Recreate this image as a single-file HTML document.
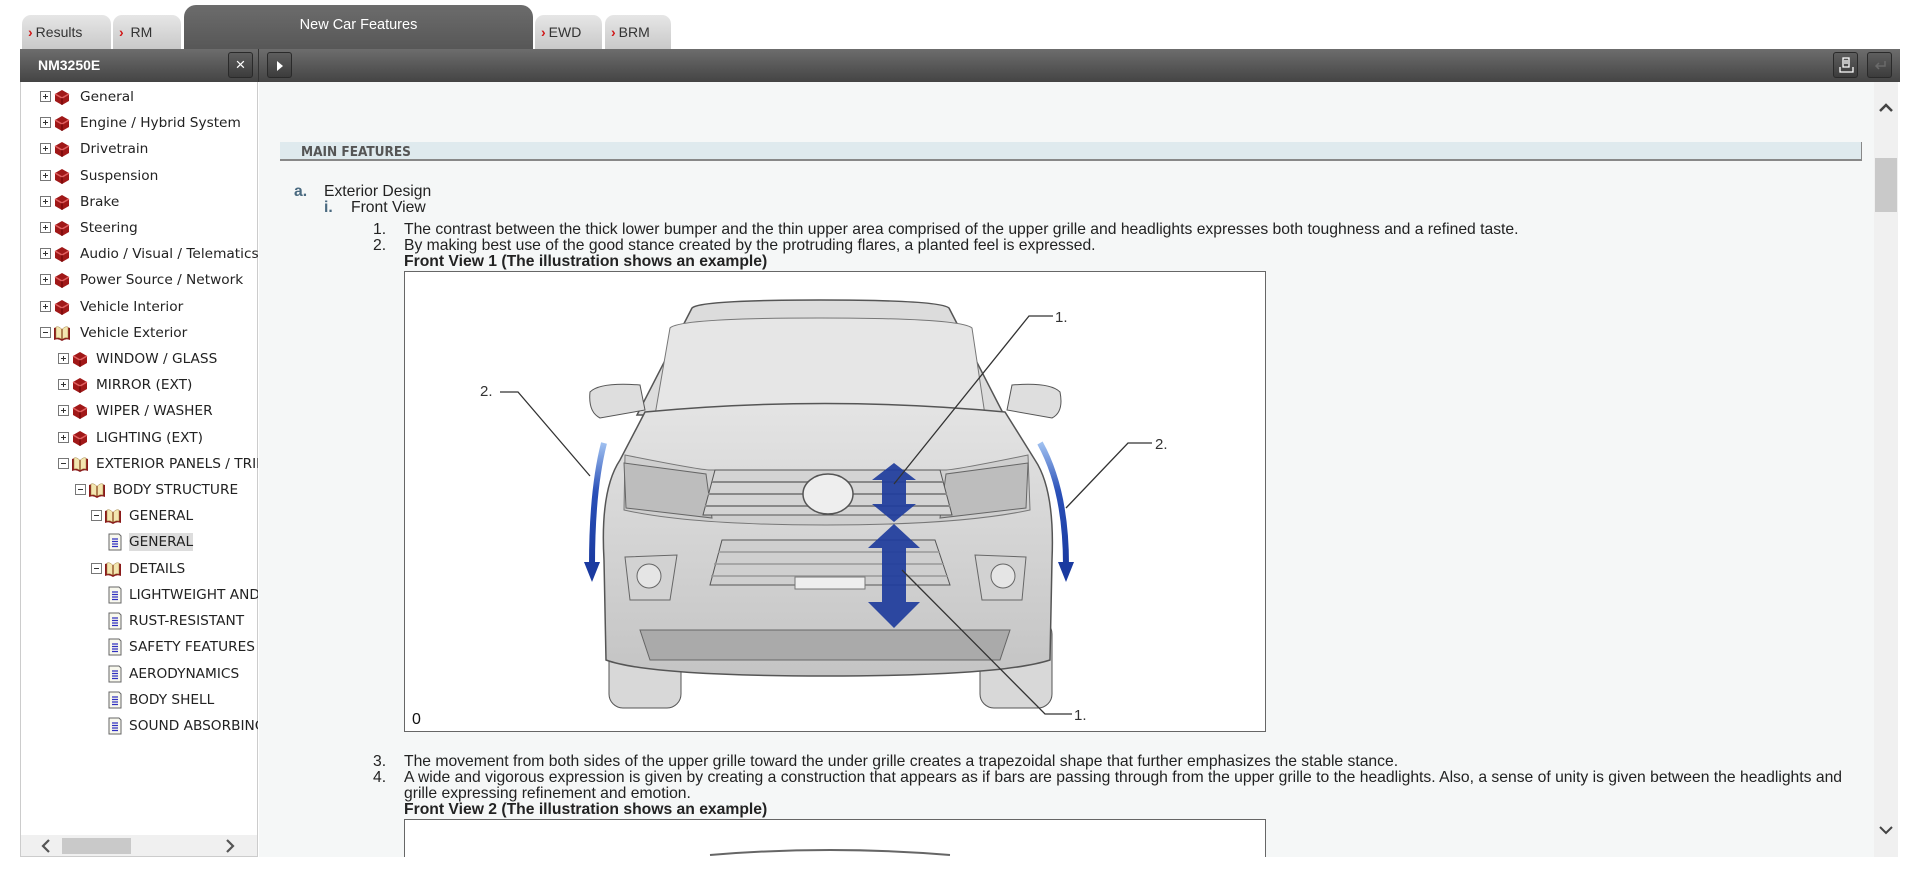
<!DOCTYPE html>
<html><head><meta charset="utf-8"><style>
*{margin:0;padding:0;box-sizing:border-box}
body{width:1920px;height:870px;background:#fff;position:relative;overflow:hidden;font-family:"Liberation Sans",sans-serif}
.tab{position:absolute;top:15px;height:34px;background:linear-gradient(#e6e6e6,#c9c9c9);border-radius:9px 9px 0 0;font-size:14px;color:#333;padding:9px 0 0 6px}
.tab b{color:#d01818;font-weight:bold;margin-right:3px}
.abs{position:absolute}
.tr{position:absolute;height:26px;line-height:26px;font-family:"DejaVu Sans",sans-serif;font-size:13.7px;color:#222;white-space:nowrap}
.pl{position:absolute;width:11px;height:11px;border:1px solid #777;background:#fff;top:7px}
.pl:before{content:"";position:absolute;left:2px;top:4px;width:5px;height:1px;background:#333}
.pl.p:after{content:"";position:absolute;left:4px;top:2px;width:1px;height:5px;background:#333}
.ct{position:absolute;font-size:15.7px;color:#222;white-space:nowrap}
.btn{position:absolute;border:1px solid #2a2a2a;border-radius:3px;background:linear-gradient(#5e5e5e,#3c3c3c)}
</style></head><body>
<div class="tab" style="left:22px;width:89px"><b>›</b>Results</div>
<div class="tab" style="left:113px;width:68px"><b>›</b> RM</div>
<div class="abs" style="left:184px;top:5px;width:349px;height:44px;background:linear-gradient(#6c6c6c,#575757);border-radius:12px 12px 0 0;color:#fff;font-size:14.5px;text-align:center;padding-top:12px">New Car Features</div>
<div class="tab" style="left:535px;width:67px"><b>›</b>EWD</div>
<div class="tab" style="left:605px;width:66px"><b>›</b>BRM</div>

<div class="abs" style="left:20px;top:49px;width:1880px;height:33px;background:linear-gradient(#6d6d6d,#444)"></div>
<div class="abs" style="left:258px;top:49px;width:1px;height:33px;background:#333"></div>
<div class="abs" style="left:38px;top:57px;color:#fff;font-weight:bold;font-size:14px">NM3250E</div>
<div class="btn" style="left:228px;top:52px;width:25px;height:26px;color:#fff;font-size:17px;text-align:center;line-height:23px">×</div>
<div class="btn" style="left:267px;top:52px;width:25px;height:26px"><div class="abs" style="left:9px;top:8px;border-left:6px solid #fff;border-top:5px solid transparent;border-bottom:5px solid transparent"></div></div>
<div class="btn" style="left:1833px;top:52px;width:25px;height:26px"><svg width="25" height="26" class="abs" style="left:0;top:0"><path d="M9 5h6v9H9zM10 8h4M10 10h4M6 14v5h13v-5" fill="none" stroke="#fff" stroke-width="1.3"/></svg></div>
<div class="btn" style="left:1867px;top:52px;width:25px;height:26px"><svg width="25" height="26" class="abs"><path d="M17 8v5H8M11 10l-3 3 3 3" fill="none" stroke="#6a6a6a" stroke-width="1.5"/></svg></div>

<div class="abs" style="left:20px;top:82px;width:238px;height:775px;background:#fff;border-left:1px solid #ccc;border-bottom:1px solid #ccc;border-right:1px solid #ccc"></div>
<div class="abs" style="left:21px;top:835px;width:236px;height:21px;background:#f0f0f0"></div>
<div class="abs" style="left:62px;top:838px;width:69px;height:16px;background:#c9c9c9"></div>
<svg class="abs" style="left:38px;top:837px" width="16" height="18"><path d="M11 3l-6 6 6 6" fill="none" stroke="#555" stroke-width="2.2"/></svg>
<svg class="abs" style="left:222px;top:837px" width="16" height="18"><path d="M5 3l6 6-6 6" fill="none" stroke="#555" stroke-width="2.2"/></svg>

<svg width="0" height="0" style="position:absolute"><defs>
<g id="bk"><path d="M2 6 L9 2 L16 6 L16 13 L9 17 L2 13Z" fill="#a01818"/><path d="M2 6 L9 10 L16 6" fill="none" stroke="#e06060" stroke-width="1.5"/><path d="M9 10v7" stroke="#600" stroke-width="1"/></g>
<g id="ob"><path d="M1 4 Q5 2 9 5 Q13 2 17 4 V16 Q13 14 9 17 Q5 14 1 16Z" fill="#8a1a1a"/><path d="M3 3 Q6 2 8.5 5 V15 Q6 13 3 14Z M15 3 Q12 2 9.5 5 V15 Q12 13 15 14Z" fill="#f3e6b0" stroke="#a08040" stroke-width=".5"/></g>
<g id="dc"><path d="M2 1h10l2 2v14H2z" fill="#f8f8ee" stroke="#666"/><path d="M5 6h6M5 8.5h6M5 11h6M5 13.5h6" stroke="#3030c0" stroke-width="1.2"/></g>
</defs></svg>

<div class="tr" style="left:40px;top:84px"><span class="pl p" style="left:0"></span><svg class="abs" style="left:13px;top:4px" width="18" height="19"><use href="#bk"/></svg><span style="margin-left:40px">General</span></div>
<div class="tr" style="left:40px;top:110px"><span class="pl p" style="left:0"></span><svg class="abs" style="left:13px;top:4px" width="18" height="19"><use href="#bk"/></svg><span style="margin-left:40px">Engine / Hybrid System</span></div>
<div class="tr" style="left:40px;top:136px"><span class="pl p" style="left:0"></span><svg class="abs" style="left:13px;top:4px" width="18" height="19"><use href="#bk"/></svg><span style="margin-left:40px">Drivetrain</span></div>
<div class="tr" style="left:40px;top:163px"><span class="pl p" style="left:0"></span><svg class="abs" style="left:13px;top:4px" width="18" height="19"><use href="#bk"/></svg><span style="margin-left:40px">Suspension</span></div>
<div class="tr" style="left:40px;top:189px"><span class="pl p" style="left:0"></span><svg class="abs" style="left:13px;top:4px" width="18" height="19"><use href="#bk"/></svg><span style="margin-left:40px">Brake</span></div>
<div class="tr" style="left:40px;top:215px"><span class="pl p" style="left:0"></span><svg class="abs" style="left:13px;top:4px" width="18" height="19"><use href="#bk"/></svg><span style="margin-left:40px">Steering</span></div>
<div class="tr" style="left:40px;top:241px;width:218px;overflow:hidden"><span class="pl p" style="left:0"></span><svg class="abs" style="left:13px;top:4px" width="18" height="19"><use href="#bk"/></svg><span style="margin-left:40px">Audio / Visual / Telematics</span></div>
<div class="tr" style="left:40px;top:267px"><span class="pl p" style="left:0"></span><svg class="abs" style="left:13px;top:4px" width="18" height="19"><use href="#bk"/></svg><span style="margin-left:40px">Power Source / Network</span></div>
<div class="tr" style="left:40px;top:294px"><span class="pl p" style="left:0"></span><svg class="abs" style="left:13px;top:4px" width="18" height="19"><use href="#bk"/></svg><span style="margin-left:40px">Vehicle Interior</span></div>
<div class="tr" style="left:40px;top:320px"><span class="pl" style="left:0"></span><svg class="abs" style="left:13px;top:4px" width="18" height="19"><use href="#ob"/></svg><span style="margin-left:40px">Vehicle Exterior</span></div>
<div class="tr" style="left:58px;top:346px"><span class="pl p" style="left:0"></span><svg class="abs" style="left:13px;top:4px" width="18" height="19"><use href="#bk"/></svg><span style="margin-left:38px">WINDOW / GLASS</span></div>
<div class="tr" style="left:58px;top:372px"><span class="pl p" style="left:0"></span><svg class="abs" style="left:13px;top:4px" width="18" height="19"><use href="#bk"/></svg><span style="margin-left:38px">MIRROR (EXT)</span></div>
<div class="tr" style="left:58px;top:398px"><span class="pl p" style="left:0"></span><svg class="abs" style="left:13px;top:4px" width="18" height="19"><use href="#bk"/></svg><span style="margin-left:38px">WIPER / WASHER</span></div>
<div class="tr" style="left:58px;top:425px"><span class="pl p" style="left:0"></span><svg class="abs" style="left:13px;top:4px" width="18" height="19"><use href="#bk"/></svg><span style="margin-left:38px">LIGHTING (EXT)</span></div>
<div class="tr" style="left:58px;top:451px;width:200px;overflow:hidden"><span class="pl" style="left:0"></span><svg class="abs" style="left:13px;top:4px" width="18" height="19"><use href="#ob"/></svg><span style="margin-left:38px">EXTERIOR PANELS / TRIM</span></div>
<div class="tr" style="left:75px;top:477px"><span class="pl" style="left:0"></span><svg class="abs" style="left:13px;top:4px" width="18" height="19"><use href="#ob"/></svg><span style="margin-left:38px">BODY STRUCTURE</span></div>
<div class="tr" style="left:91px;top:503px"><span class="pl" style="left:0"></span><svg class="abs" style="left:13px;top:4px" width="18" height="19"><use href="#ob"/></svg><span style="margin-left:38px">GENERAL</span></div>
<div class="tr" style="left:107px;top:529px"><svg class="abs" style="left:0;top:4px" width="16" height="19"><use href="#dc"/></svg><span style="margin-left:22px;background:#ddd;padding:1px 0">GENERAL</span></div>
<div class="tr" style="left:91px;top:556px"><span class="pl" style="left:0"></span><svg class="abs" style="left:13px;top:4px" width="18" height="19"><use href="#ob"/></svg><span style="margin-left:38px">DETAILS</span></div>
<div class="tr" style="left:107px;top:582px;width:151px;overflow:hidden"><svg class="abs" style="left:0;top:4px" width="16" height="19"><use href="#dc"/></svg><span style="margin-left:22px">LIGHTWEIGHT AND</span></div>
<div class="tr" style="left:107px;top:608px;width:151px;overflow:hidden"><svg class="abs" style="left:0;top:4px" width="16" height="19"><use href="#dc"/></svg><span style="margin-left:22px">RUST-RESISTANT</span></div>
<div class="tr" style="left:107px;top:634px;width:151px;overflow:hidden"><svg class="abs" style="left:0;top:4px" width="16" height="19"><use href="#dc"/></svg><span style="margin-left:22px">SAFETY FEATURES</span></div>
<div class="tr" style="left:107px;top:661px;width:151px;overflow:hidden"><svg class="abs" style="left:0;top:4px" width="16" height="19"><use href="#dc"/></svg><span style="margin-left:22px">AERODYNAMICS</span></div>
<div class="tr" style="left:107px;top:687px;width:151px;overflow:hidden"><svg class="abs" style="left:0;top:4px" width="16" height="19"><use href="#dc"/></svg><span style="margin-left:22px">BODY SHELL</span></div>
<div class="tr" style="left:107px;top:713px;width:151px;overflow:hidden"><svg class="abs" style="left:0;top:4px" width="16" height="19"><use href="#dc"/></svg><span style="margin-left:22px">SOUND ABSORBING</span></div>

<div class="abs" style="left:259px;top:82px;width:1615px;height:775px;background:#f5f7f7"></div>
<div class="abs" style="left:1874px;top:82px;width:24px;height:775px;background:#f0f0f0"></div>
<div class="abs" style="left:1875px;top:158px;width:22px;height:54px;background:#c9c9c9"></div>
<svg class="abs" style="left:1874px;top:98px" width="24" height="20"><path d="M6 13l6-6 6 6" fill="none" stroke="#444" stroke-width="2.5"/></svg>
<svg class="abs" style="left:1874px;top:820px" width="24" height="20"><path d="M6 7l6 6 6-6" fill="none" stroke="#444" stroke-width="2"/></svg>

<div class="abs" style="left:280px;top:142px;width:1582px;height:19px;background:#dfeaee;border-bottom:2px solid #888;border-right:1px solid #888"></div>
<div class="abs" style="left:301px;top:144px;font-weight:bold;font-size:13.5px;color:#555;font-family:'DejaVu Sans Condensed','DejaVu Sans',sans-serif">MAIN FEATURES</div>

<div class="ct" style="left:294px;top:183px;color:#4a6a80;font-weight:bold">a.</div>
<div class="ct" style="left:324px;top:183px">Exterior Design</div>
<div class="ct" style="left:324px;top:199px;color:#4a6a80;font-weight:bold">i.</div>
<div class="ct" style="left:351px;top:199px">Front View</div>
<div class="ct" style="left:373px;top:221px">1.</div>
<div class="ct" style="left:404px;top:221px">The contrast between the thick lower bumper and the thin upper area comprised of the upper grille and headlights expresses both toughness and a refined taste.</div>
<div class="ct" style="left:373px;top:237px">2.</div>
<div class="ct" style="left:404px;top:237px">By making best use of the good stance created by the protruding flares, a planted feel is expressed.</div>
<div class="ct" style="left:404px;top:253px;font-weight:bold">Front View 1 (The illustration shows an example)</div>
<div class="ct" style="left:373px;top:753px">3.</div>
<div class="ct" style="left:404px;top:753px">The movement from both sides of the upper grille toward the under grille creates a trapezoidal shape that further emphasizes the stable stance.</div>
<div class="ct" style="left:373px;top:769px">4.</div>
<div class="ct" style="left:404px;top:769px">A wide and vigorous expression is given by creating a construction that appears as if bars are passing through from the upper grille to the headlights. Also, a sense of unity is given between the headlights and</div>
<div class="ct" style="left:404px;top:785px">grille expressing refinement and emotion.</div>
<div class="ct" style="left:404px;top:801px;font-weight:bold">Front View 2 (The illustration shows an example)</div>

<div class="abs" style="left:404px;top:271px;width:862px;height:461px;background:#fff;border:1px solid #666"></div>
<div class="abs" style="left:404px;top:819px;width:862px;height:38px;background:#fff;border:1px solid #666;border-bottom:none"></div>
<svg class="abs" style="left:0;top:0" width="1920" height="870">
<defs>
<linearGradient id="bd" x1="0" y1="0" x2="0" y2="1"><stop offset="0" stop-color="#e4e4e4"/><stop offset="1" stop-color="#c4c4c4"/></linearGradient>
<linearGradient id="ar" x1="0" y1="0" x2="0" y2="1"><stop offset="0" stop-color="#9fc0f0"/><stop offset=".4" stop-color="#2a50b8"/><stop offset="1" stop-color="#1a3aa0"/></linearGradient>
</defs>
<path d="M710 855 Q830 845 950 855" stroke="#666" stroke-width="2" fill="none"/>
<rect x="609" y="620" width="72" height="88" rx="14" fill="#d8d8d8" stroke="#555"/>
<rect x="980" y="620" width="72" height="88" rx="14" fill="#d8d8d8" stroke="#555"/>
<path d="M692 308 Q700 300 820 300 Q940 300 949 308 L1004 415 L637 415Z" fill="#dcdcdc" stroke="#555" stroke-width="1.5"/>
<path d="M670 328 Q680 318 820 318 Q960 318 972 328 L985 415 L655 415Z" fill="#e6e6e6" stroke="#777"/>
<path d="M590 392 Q600 382 640 385 L645 410 L600 418 Q588 412 590 392Z" fill="#dedede" stroke="#555"/>
<path d="M1060 392 Q1050 382 1012 385 L1007 410 L1052 418 Q1064 412 1060 392Z" fill="#dedede" stroke="#555"/>
<path d="M645 412 Q825 395 1005 412 L1035 460 Q1055 490 1052 560 L1050 660 Q1000 676 826 676 Q650 676 606 660 L604 560 Q600 490 620 460Z" fill="url(#bd)" stroke="#555" stroke-width="1.5"/>
<path d="M625 455 Q700 470 710 470 L945 470 Q955 470 1028 455 L1030 510 Q960 525 826 525 Q690 525 624 510Z" fill="#cfcfcf" stroke="#777"/>
<path d="M624 463 L706 474 L712 518 L626 508Z" fill="#bdbdbd" stroke="#666"/>
<path d="M1028 463 L946 474 L940 518 L1026 508Z" fill="#bdbdbd" stroke="#666"/>
<path d="M715 470 L940 470 L952 515 L703 515Z" fill="#d4d4d4" stroke="#555"/>
<path d="M712 482 H943 M708 494 H947 M705 506 H950" stroke="#888" stroke-width="2"/>
<ellipse cx="828" cy="494" rx="25" ry="20" fill="#eee" stroke="#555" stroke-width="1.5"/>
<path d="M722 540 L935 540 L950 585 L710 585Z" fill="#cfcfcf" stroke="#555"/>
<path d="M718 552 H940 M714 564 H944 M711 576 H948" stroke="#999" stroke-width="1.5"/>
<rect x="795" y="577" width="70" height="12" fill="#eee" stroke="#777"/>
<path d="M625 557 L677 555 L670 600 L630 600Z" fill="#d2d2d2" stroke="#666"/>
<circle cx="649" cy="576" r="12" fill="#e5e5e5" stroke="#666"/>
<path d="M1026 557 L975 555 L982 600 L1022 600Z" fill="#d2d2d2" stroke="#666"/>
<circle cx="1003" cy="576" r="12" fill="#e5e5e5" stroke="#666"/>
<path d="M640 630 H1010 L1000 660 H650Z" fill="#aaa" stroke="#666"/>
<path d="M882 490 V480 H872 L894 463 L916 480 H906 V504 H916 L894 522 L872 504 H882Z" fill="#1e3c9c" opacity=".92"/>
<path d="M882 560 V548 H868 L894 524 L920 548 H906 V602 H920 L894 628 L868 602 H882Z" fill="#1e3c9c" opacity=".92"/>
<path d="M604 443 Q592 490 592 565" stroke="url(#ar)" stroke-width="6" fill="none"/>
<path d="M584 562 L592 582 L600 562Z" fill="#1a3aa0"/>
<path d="M1040 443 Q1066 490 1066 565" stroke="url(#ar)" stroke-width="6" fill="none"/>
<path d="M1058 562 L1066 582 L1074 562Z" fill="#1a3aa0"/>
<g stroke="#333" stroke-width="1.3" fill="none">
<path d="M1053 316 H1029 L894 484"/>
<path d="M500 392 H518 L590 476"/>
<path d="M1152 443 H1128 L1066 508"/>
<path d="M1072 714 H1045 L902 570"/>
</g>
<g font-family="Liberation Sans Narrow,Liberation Sans,sans-serif" font-size="15" fill="#333">
<text x="1055" y="322">1.</text>
<text x="480" y="396">2.</text>
<text x="1155" y="449">2.</text>
<text x="1074" y="720">1.</text>
<text x="412" y="724" font-size="16" fill="#111">0</text>
</g>
</svg>
<div class="abs" style="left:0;top:857px;width:1920px;height:13px;background:#fff"></div>
</body></html>
